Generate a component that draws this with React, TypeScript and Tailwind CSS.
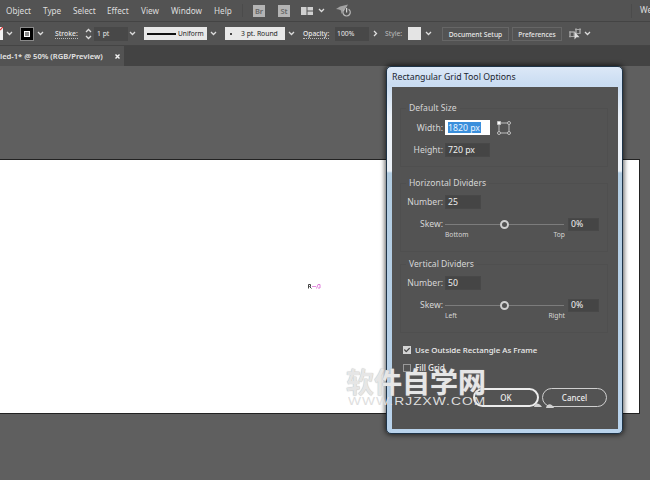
import { FaCheck } from 'react-icons/fa';

interface SliderGroupProps {
    title: string;
    number: string;
    from: string;
    to: string;
}

function Chevron({ className = '' }: { className?: string }) {
    return (
        <svg viewBox="0 0 7 5" className={`h-[5px] w-[7px] shrink-0 ${className}`} fill="none" stroke="#dcdcdc" strokeWidth="1.3">
            <path d="M1 1 L3.5 3.5 L6 1" />
        </svg>
    );
}

function SliderGroup({ title, number, from, to }: SliderGroupProps) {
    return (
        <div className="h-[69px] w-[208px] border border-[#4f4f4f]">
            <div className="-mt-[8px] ml-[5px] flex">
                <span className="bg-[#535353] px-[3px] text-[8.6px] leading-[14px]">{title}</span>
            </div>
            <div className="mt-[5px] flex h-[14px] items-center">
                <span className="w-[42px] text-right text-[8.6px] leading-[14px]">Number:</span>
                <span className="ml-[2px] h-[14px] w-[36px] border border-[#484848] bg-[#454545] pl-[2px] text-[8.7px] leading-[12px] text-[#f0f0f0]">{number}</span>
            </div>
            <div className="mt-[8px] flex h-[14px] items-center">
                <span className="w-[42px] text-right text-[8.6px] leading-[14px]">Skew:</span>
                <div className="ml-[2px] flex h-[10px] w-[119px] items-center">
                    <div className="h-px w-[55px] bg-[#7c7c7c]"></div>
                    <div className="h-[9px] w-[9px] shrink-0 rounded-full border-2 border-[#d0d0d0]"></div>
                    <div className="h-px flex-1 bg-[#7c7c7c]"></div>
                </div>
                <span className="ml-[4px] h-[13px] w-[31px] border border-[#484848] bg-[#454545] pl-[2px] text-[8.7px] leading-[11px] text-[#f0f0f0]">0%</span>
            </div>
            <div className="ml-[44px] flex w-[120px] justify-between text-[6.7px] leading-[8px]">
                <span>{from}</span>
                <span>{to}</span>
            </div>
        </div>
    );
}

function MenuBar() {
    return (
        <div className="flex h-[22px] items-center border-b border-[#444] bg-[#535353] pl-[6px] text-[8.2px] text-[#dedede]">
            <span className="w-[37px] pt-px">Object</span>
            <span className="w-[30px] pt-px">Type</span>
            <span className="w-[34px] pt-px">Select</span>
            <span className="w-[34px] pt-px">Effect</span>
            <span className="w-[30px] pt-px">View</span>
            <span className="w-[43px] pt-px">Window</span>
            <span className="w-[28px] pt-px">Help</span>
            <span className="h-[13px] w-[11px] border-l border-[#4b4b4b]"></span>
            <span className="h-[12px] w-[12px] bg-[#b4b4b4] text-center text-[7.5px] leading-[12px] font-semibold text-[#666]">Br</span>
            <span className="ml-[13px] h-[12px] w-[12px] bg-[#b4b4b4] text-center text-[7.5px] leading-[12px] font-semibold text-[#666]">St</span>
            <svg viewBox="0 0 12 8" className="ml-[11px] h-[8px] w-[12px] shrink-0" fill="#d0d0d0">
                <path d="M0 0h5.5v8H0zM6.5 0H12v3.5H6.5zM6.5 4.5H12V8H6.5z" />
            </svg>
            <Chevron className="ml-[5px]" />
            <svg viewBox="0 0 16 13" className="ml-[11px] h-[13px] w-[16px] shrink-0" fill="none">
                <path d="M0 5 L4 2.5 L12 0.5 L10 4 L7 6.5 L5.5 10 L5 6.5 L3 5.5 Z" fill="#a2a2a2" />
                <path d="M8.6 5.2a3.7 3.7 0 1 0 4 0" stroke="#b8b8b8" strokeWidth="1.2" />
                <path d="M10.6 4v4.5" stroke="#d4d4d4" strokeWidth="1.2" />
            </svg>
            <span className="ml-auto h-[14px] w-[9px] border-l border-[#4b4b4b]"></span>
            <span className="w-[10px] whitespace-nowrap">We</span>
        </div>
    );
}

function ControlBar() {
    return (
        <div className="flex h-[24px] items-center border-b border-[#444] bg-[#535353] text-[6.8px] text-[#e8e8e8]">
            <svg viewBox="0 0 3 13" className="h-[13px] w-[3px] shrink-0">
                <path d="M0 0h3v13H0z" fill="#f2f2f2" />
                <path d="M0 3L3 0" stroke="#d33" strokeWidth="1.2" />
            </svg>
            <Chevron className="ml-[3px]" />
            <div className="ml-[7px] flex h-[14px] w-[14px] items-center justify-center border border-[#8a8a8a] bg-black">
                <div className="h-[6px] w-[6px] border border-white bg-[#888]"></div>
            </div>
            <Chevron className="ml-[3px]" />
            <span className="ml-[11px] w-[30px] leading-[9px]"><span className="border-b border-dotted border-[#bbb] font-medium">Stroke:</span></span>
            <svg viewBox="0 0 7 12" className="h-[12px] w-[7px] shrink-0" fill="none" stroke="#dcdcdc" strokeWidth="1.3">
                <path d="M1 4L3.5 1.5L6 4M1 8L3.5 10.5L6 8" />
            </svg>
            <span className="ml-[2px] h-[14px] w-[34px] bg-[#484848] pl-[3px] leading-[14px]">1 pt</span>
            <Chevron className="ml-[1px]" />
            <div className="ml-[8px] flex h-[13px] w-[63px] items-center bg-[#e8e8e8] text-[#222]">
                <div className="ml-[3px] h-[2px] w-[29px] bg-[#111]"></div>
                <span className="ml-[2px] text-[6.6px] leading-[13px]">Uniform</span>
            </div>
            <Chevron className="ml-[3px]" />
            <div className="ml-[8px] flex h-[13px] w-[60px] items-center bg-[#e8e8e8] text-[#222]">
                <div className="ml-[5px] h-[2px] w-[2px] rounded-full bg-[#111]"></div>
                <span className="ml-[9px] text-[6.8px] whitespace-nowrap leading-[13px]">3 pt. Round</span>
            </div>
            <Chevron className="ml-[3px]" />
            <span className="ml-[8px] w-[32px] leading-[9px]"><span className="border-b border-dotted border-[#bbb] text-[6.7px] font-medium">Opacity:</span></span>
            <span className="h-[14px] w-[34px] bg-[#484848] pl-[2px] leading-[14px]">100%</span>
            <svg viewBox="0 0 5 7" className="ml-[4px] h-[7px] w-[5px] shrink-0" fill="none" stroke="#e0e0e0" strokeWidth="1.3">
                <path d="M1 1L3.5 3.5L1 6" />
            </svg>
            <span className="ml-[7px] w-[23px] pt-px text-[#bdbdbd]">Style:</span>
            <div className="h-[13px] w-[13px] bg-[#e4e4e4]"></div>
            <Chevron className="ml-[4px]" />
            <span className="ml-[10px] h-[14px] w-[67px] border border-[#666] pt-px text-center text-[6.7px] leading-[12px] font-medium whitespace-nowrap">Document Setup</span>
            <span className="ml-[3px] h-[14px] w-[50px] border border-[#666] pt-px text-center text-[6.6px] leading-[12px] font-medium">Preferences</span>
            <svg viewBox="0 0 12 12" className="ml-[7px] h-[12px] w-[12px] shrink-0" fill="none" stroke="#a8a8a8" strokeWidth="0.9">
                <path d="M1 4h4v4.5H1zM0 4h6M0 8.5h6M1 3v6.5M7 1.5h4v4H7zM6 1.5h6M7 0v6M11 0v6" />
                <path d="M5.5 3.5v8l2-2.2h3z" fill="#dedede" stroke="none" />
            </svg>
            <Chevron className="ml-[3px]" />
        </div>
    );
}

function Dialog() {
    return (
        <div className="absolute top-[66px] left-[386px] h-[368px] w-[237px] rounded-[5px] border border-[#1f3448] bg-[linear-gradient(#dce8f7_0px,#c9dcf2_18px,#edf2f8_50px,#edf2f8_104px,#b3cde2_106px,#b9d3ec_100%)] pt-px pr-[4px] pl-[5px] shadow-[0_0_5px_1px_rgba(0,0,0,0.65)]">
            <div className="h-[19px] text-[8.75px] leading-[19px] text-[#1c2530]">Rectangular Grid Tool Options</div>
            <div className="h-[342px] w-[226px] bg-[#535353] pt-[21px] pl-[8px] text-[#d6d6d6]">
                <div className="h-[59px] w-[208px] border border-[#4f4f4f]">
                    <div className="-mt-[8px] ml-[5px] flex">
                        <span className="bg-[#535353] px-[3px] text-[8.6px] leading-[14px]">Default Size</span>
                    </div>
                    <div className="mt-[5px] flex h-[15px] items-center">
                        <span className="w-[42px] pt-px text-right text-[8.6px]">Width:</span>
                        <span className="ml-[2px] flex h-[15px] w-[45px] items-center bg-white pl-[3px] text-[8.7px] leading-[12px]">
                            <span className="h-[11px] w-[33px] bg-[#3a8fdc] whitespace-nowrap text-[#e8f4ff]">1820 px</span>
                        </span>
                        <svg viewBox="0 0 14 14" className="ml-[7px] h-[14px] w-[14px]" fill="none" stroke="#c8c8c8" strokeWidth="0.9">
                            <path d="M3.5 2h7M2 3.5v7M3.5 12h7M12 3.5v7" />
                            <path d="M0.5 0.5h3v3h-3z" fill="#fff" />
                            <circle cx="12" cy="2" r="1.5" />
                            <circle cx="2" cy="12" r="1.5" />
                            <circle cx="12" cy="12" r="1.5" />
                        </svg>
                    </div>
                    <div className="mt-[8px] flex h-[14px] items-center">
                        <span className="w-[42px] text-right text-[8.6px]">Height:</span>
                        <span className="ml-[2px] h-[14px] w-[45px] border border-[#484848] bg-[#454545] pl-[2px] text-[8.7px] leading-[12px] text-[#f0f0f0]">720 px</span>
                    </div>
                </div>
                <div className="mt-[16px]">
                    <SliderGroup title="Horizontal Dividers" number="25" from="Bottom" to="Top" />
                </div>
                <div className="mt-[12px]">
                    <SliderGroup title="Vertical Dividers" number="50" from="Left" to="Right" />
                </div>
                <div className="mt-[12px] ml-[3px] flex h-[10px] items-center">
                    <div className="flex h-[8px] w-[8px] items-center justify-center bg-[#d4d4d4]">
                        <FaCheck className="h-[6px] w-[6px] text-[#444]" />
                    </div>
                    <span className="ml-[4px] pt-px text-[7.9px] font-medium text-[#ededed]">Use Outside Rectangle As Frame</span>
                </div>
                <div className="mt-[8px] ml-[3px] flex h-[10px] items-center">
                    <div className="h-[8px] w-[8px] border border-[#999]"></div>
                    <span className="ml-[4px] text-[8.2px] font-medium text-[#ededed]">Fill Grid</span>
                </div>
                <div className="mt-[15px] ml-[73px] flex gap-[3px] text-center text-[8px] font-medium text-[#ededed]">
                    <span className="h-[19px] w-[66px] rounded-full border-2 border-[#ededed] leading-[16px]">OK</span>
                    <span className="h-[19px] w-[65px] rounded-full border border-[#cfcfcf] leading-[18px]">Cancel</span>
                </div>
            </div>
        </div>
    );
}

function Watermark() {
    return (
        <div className="absolute top-[367px] left-[346px] w-[212px] text-[#e6e6e6] [text-shadow:0_0_1px_#aaa]">
            <div className="h-[28px] font-['Noto_Sans_CJK_SC',sans-serif] text-[28px] leading-[29px] font-bold whitespace-nowrap">软件自学网</div>
            <div className="ml-[2px] h-[12px] w-[106px] origin-left scale-x-[1.3] font-['Liberation_Sans',sans-serif] text-[10.6px] leading-[12px] tracking-[0.8px] whitespace-nowrap text-[#dedede] [text-shadow:none]">WWW.RJZXW.COM</div>
            <svg viewBox="0 0 22 7" className="absolute top-[35px] left-[188px] h-[7px] w-[22px]" fill="#d2d2d2">
                <path d="M0 5 C1 1 4 0 8 5ZM12 6 C13 1 18 1 20 6Z" />
            </svg>
        </div>
    );
}

export default function App() {
    return (
        <div className="relative flex h-[480px] w-[650px] flex-col overflow-hidden bg-[#5f5f5f] font-['Noto_Sans',sans-serif]">
            <MenuBar />
            <ControlBar />
            <div className="flex h-[20px] bg-[#434343]">
                <div className="flex w-[124px] items-center bg-[#535353] text-[7.6px] font-semibold text-[#e6e6e6]">
                    <span className="w-[115px] pt-px whitespace-nowrap">led-1* @ 50% (RGB/Preview)</span>
                    <svg viewBox="0 0 5 5" className="h-[5px] w-[5px] shrink-0" stroke="#f4f4f4" strokeWidth="1.4">
                        <path d="M0.5 0.5l4 4M4.5 0.5l-4 4" />
                    </svg>
                </div>
            </div>
            <div className="mt-[93px] h-[255px] w-[640px] border-y border-r border-[#222] bg-white pt-[124px] pl-[308px]">
                <svg viewBox="0 0 14 5" className="h-[5px] w-[14px]" fill="none">
                    <path d="M0.5 4.5V0.5h2v2h-1l2 2" stroke="#444" />
                    <path d="M4 2.5h4" stroke="#e58be0" />
                    <path d="M8.5 4.5l1.5-4h2v3.5h-2" stroke="#e07fdb" />
                </svg>
            </div>
            <Dialog />
            <Watermark />
        </div>
    );
}
